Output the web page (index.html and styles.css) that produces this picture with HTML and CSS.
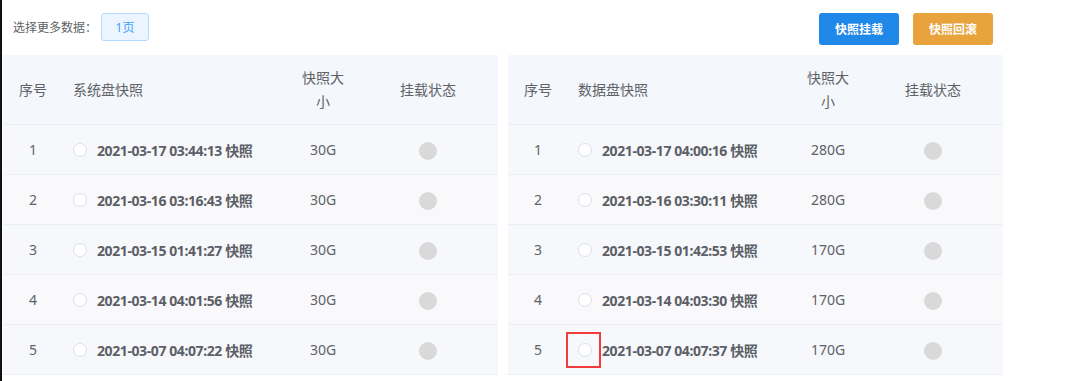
FILE: index.html
```html
<!DOCTYPE html>
<html lang="zh-CN">
<head>
    <meta charset="UTF-8">
    <title>快照列表</title>
    <link rel="stylesheet" href="styles.css">
</head>
<body>
    <div class="page">
        <div class="toolbar">
            <div class="more">
                <span class="more-label">选择更多数据：</span>
                <span class="page-btn">1页</span>
            </div>
            <div class="actions">
                <button class="btn btn-primary">快照挂载</button>
                <button class="btn btn-warning">快照回滚</button>
            </div>
        </div>

        <div class="tables">
            <!-- 系统盘 -->
            <table class="snap-table">
                <colgroup>
                    <col class="c-no"><col class="c-name"><col class="c-size"><col class="c-state">
                </colgroup>
                <thead>
                    <tr>
                        <th class="center">序号</th>
                        <th>系统盘快照</th>
                        <th class="center">快照大小</th>
                        <th class="center">挂载状态</th>
                    </tr>
                </thead>
                <tbody>
                    <tr>
                        <td class="center">1</td>
                        <td><span class="radio"></span><span class="snap">2021-03-17 03:44:13 快照</span></td>
                        <td class="center">30G</td>
                        <td class="center"><span class="dot"></span></td>
                    </tr>
                    <tr>
                        <td class="center">2</td>
                        <td><span class="radio"></span><span class="snap">2021-03-16 03:16:43 快照</span></td>
                        <td class="center">30G</td>
                        <td class="center"><span class="dot"></span></td>
                    </tr>
                    <tr>
                        <td class="center">3</td>
                        <td><span class="radio"></span><span class="snap">2021-03-15 01:41:27 快照</span></td>
                        <td class="center">30G</td>
                        <td class="center"><span class="dot"></span></td>
                    </tr>
                    <tr>
                        <td class="center">4</td>
                        <td><span class="radio"></span><span class="snap">2021-03-14 04:01:56 快照</span></td>
                        <td class="center">30G</td>
                        <td class="center"><span class="dot"></span></td>
                    </tr>
                    <tr>
                        <td class="center">5</td>
                        <td><span class="radio"></span><span class="snap">2021-03-07 04:07:22 快照</span></td>
                        <td class="center">30G</td>
                        <td class="center"><span class="dot"></span></td>
                    </tr>
                </tbody>
            </table>

            <!-- 数据盘 -->
            <table class="snap-table">
                <colgroup>
                    <col class="c-no"><col class="c-name"><col class="c-size"><col class="c-state">
                </colgroup>
                <thead>
                    <tr>
                        <th class="center">序号</th>
                        <th>数据盘快照</th>
                        <th class="center">快照大小</th>
                        <th class="center">挂载状态</th>
                    </tr>
                </thead>
                <tbody>
                    <tr>
                        <td class="center">1</td>
                        <td><span class="radio"></span><span class="snap">2021-03-17 04:00:16 快照</span></td>
                        <td class="center">280G</td>
                        <td class="center"><span class="dot"></span></td>
                    </tr>
                    <tr>
                        <td class="center">2</td>
                        <td><span class="radio"></span><span class="snap">2021-03-16 03:30:11 快照</span></td>
                        <td class="center">280G</td>
                        <td class="center"><span class="dot"></span></td>
                    </tr>
                    <tr>
                        <td class="center">3</td>
                        <td><span class="radio"></span><span class="snap">2021-03-15 01:42:53 快照</span></td>
                        <td class="center">170G</td>
                        <td class="center"><span class="dot"></span></td>
                    </tr>
                    <tr>
                        <td class="center">4</td>
                        <td><span class="radio"></span><span class="snap">2021-03-14 04:03:30 快照</span></td>
                        <td class="center">170G</td>
                        <td class="center"><span class="dot"></span></td>
                    </tr>
                    <tr>
                        <td class="center">5</td>
                        <td><span class="radio"><span class="mark"></span></span><span class="snap">2021-03-07 04:07:37 快照</span></td>
                        <td class="center">170G</td>
                        <td class="center"><span class="dot"></span></td>
                    </tr>
                </tbody>
            </table>
        </div>
    </div>
</body>
</html>
```

FILE: styles.css
```css
body {
    margin: 0;
    background: #fff;
    font-family: "Noto Sans", "Noto Sans CJK SC", sans-serif;
    color: #606266;
}

.page {
    border-left: 2px solid #111;
    padding-left: 1px;
    min-height: 381px;
    box-sizing: border-box;
}

.toolbar {
    width: 1000px;
    box-sizing: border-box;
    display: flex;
    justify-content: space-between;
    align-items: flex-start;
    padding: 13px 10px 10px 10px;
}

.more {
    display: flex;
    align-items: center;
    height: 28px;
}

.more-label {
    font-size: 12px;
    color: #606266;
    margin-right: 4px;
}

.page-btn {
    display: inline-flex;
    align-items: center;
    justify-content: center;
    width: 48px;
    height: 28px;
    box-sizing: border-box;
    border: 1px solid #b3d8ff;
    border-radius: 3px;
    background: #ecf5ff;
    color: #409eff;
    font-size: 12px;
}

.actions {
    display: flex;
    gap: 14px;
}

.btn {
    width: 80px;
    height: 32px;
    border: none;
    border-radius: 3px;
    color: #fff;
    font-family: inherit;
    font-size: 12px;
    font-weight: bold;
    padding: 0;
}

.btn-primary {
    background: #2088e8;
}

.btn-warning {
    background: #e8a33d;
}

.tables {
    display: flex;
    gap: 10px;
}

.snap-table {
    width: 495px;
    table-layout: fixed;
    border-collapse: separate;
    border-spacing: 0;
    font-size: 14px;
}

.c-no { width: 60px; }
.c-name { width: 225px; }
.c-size { width: 70px; }
.c-state { width: 140px; }

.snap-table th,
.snap-table td {
    padding: 0 10px;
    text-align: left;
    border-bottom: 1px solid #ebeef5;
}

.snap-table th {
    height: 69px;
    font-weight: normal;
    line-height: 24px;
    background: #f4f7fc;
    color: #606266;
}

.snap-table td {
    height: 49px;
    line-height: 23px;
    white-space: nowrap;
}

.snap-table tbody tr:nth-child(odd) td {
    background: #f6f8fc;
}

.snap-table tbody tr:nth-child(even) td {
    background: #f9f9fb;
}

.snap-table .center {
    text-align: center;
}

.radio {
    position: relative;
    display: inline-block;
    width: 14px;
    height: 14px;
    box-sizing: border-box;
    border: 1px solid #dcdfe6;
    border-radius: 50%;
    background: #fff;
    vertical-align: middle;
    margin-right: 10px;
}

.mark {
    position: absolute;
    left: -13px;
    top: -12px;
    width: 35px;
    height: 36px;
    box-sizing: border-box;
    border: 2px solid #f23c3c;
}

.snap {
    font-weight: bold;
    letter-spacing: -0.4px;
    color: #5c5f66;
    vertical-align: middle;
}

.dot {
    display: inline-block;
    width: 18px;
    height: 18px;
    border-radius: 50%;
    background: #d9d9d9;
    vertical-align: middle;
}
```
